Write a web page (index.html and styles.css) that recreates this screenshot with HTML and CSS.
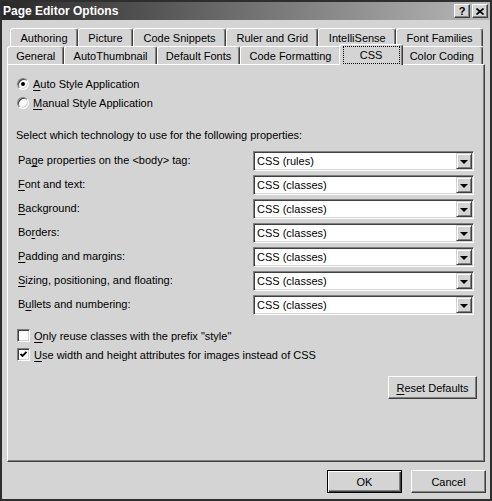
FILE: index.html
```html
<!DOCTYPE html>
<html lang="en">
<head>
    <meta charset="UTF-8" />
    <title>Page Editor Options</title>
    <link rel="stylesheet" href="styles.css">
</head>
<body>
<div class="window">
    <div class="titlebar">
        <span class="title">Page Editor Options</span>
        <div class="caption-btns">
            <span class="cap-btn">?</span>
            <span class="cap-btn">
                <svg width="8" height="7" viewBox="0 0 8 7"><path d="M0.5 0.5 L7.5 6.5 M7.5 0.5 L0.5 6.5" stroke="#000" stroke-width="1.6"/></svg>
            </span>
        </div>
    </div>

    <div class="tabs">
        <div class="tab-row back">
            <div class="tab">Authoring</div>
            <div class="tab">Picture</div>
            <div class="tab">Code Snippets</div>
            <div class="tab">Ruler and Grid</div>
            <div class="tab">IntelliSense</div>
            <div class="tab">Font Families</div>
        </div>
        <div class="tab-row front">
            <div class="tab">General</div>
            <div class="tab">AutoThumbnail</div>
            <div class="tab">Default Fonts</div>
            <div class="tab">Code Formatting</div>
            <div class="tab active"><span class="focus">CSS</span></div>
            <div class="tab">Color Coding</div>
        </div>
    </div>

    <div class="panel">
        <div class="radio-list">
            <div class="opt"><span class="radio checked"></span><span><u>A</u>uto Style Application</span></div>
            <div class="opt"><span class="radio"></span><span><u>M</u>anual Style Application</span></div>
        </div>

        <div class="intro">Select which technology to use for the following properties:</div>

        <div class="props">
            <span class="prop-label">Pa<u>g</u>e properties on the &lt;body&gt; tag:</span>
            <div class="combo"><span class="combo-value">CSS (rules)</span><span class="combo-btn"></span></div>

            <span class="prop-label"><u>F</u>ont and text:</span>
            <div class="combo"><span class="combo-value">CSS (classes)</span><span class="combo-btn"></span></div>

            <span class="prop-label"><u>B</u>ackground:</span>
            <div class="combo"><span class="combo-value">CSS (classes)</span><span class="combo-btn"></span></div>

            <span class="prop-label">Bo<u>r</u>ders:</span>
            <div class="combo"><span class="combo-value">CSS (classes)</span><span class="combo-btn"></span></div>

            <span class="prop-label"><u>P</u>adding and margins:</span>
            <div class="combo"><span class="combo-value">CSS (classes)</span><span class="combo-btn"></span></div>

            <span class="prop-label"><u>S</u>izing, positioning, and floating:</span>
            <div class="combo"><span class="combo-value">CSS (classes)</span><span class="combo-btn"></span></div>

            <span class="prop-label">B<u>u</u>llets and numbering:</span>
            <div class="combo"><span class="combo-value">CSS (classes)</span><span class="combo-btn"></span></div>
        </div>

        <div class="checks">
            <div class="opt"><span class="check"></span><span><u>O</u>nly reuse classes with the prefix "style"</span></div>
            <div class="opt">
                <span class="check">
                    <svg width="7" height="7" viewBox="0 0 7 7"><path d="M0.5 3 L2.5 5 L6.5 1" fill="none" stroke="#000" stroke-width="1.8"/></svg>
                </span>
                <span><u>U</u>se width and height attributes for images instead of CSS</span>
            </div>
        </div>

        <div class="actions">
            <button class="btn reset"><u>R</u>eset Defaults</button>
        </div>
    </div>

    <div class="footer">
        <button class="btn default">OK</button>
        <button class="btn">Cancel</button>
    </div>
</div>
</body>
</html>
```

FILE: styles.css
```css
* {
    box-sizing: border-box;
}
body {
    margin: 0;
    font-family: "Liberation Sans", Arial, sans-serif;
    font-size: 11px;
    color: #000;
    background: #d4d4d4;
}
u {
    text-decoration-thickness: 1px;
    text-underline-offset: 2px;
}
.window {
    width: 492px;
    height: 501px;
    border: 2px solid #2e2e2e;
    background: #d4d4d4;
    display: flex;
    flex-direction: column;
}

/* title bar */
.titlebar {
    height: 18px;
    flex: none;
    display: flex;
    align-items: center;
    justify-content: space-between;
    padding: 0 2px 0 1px;
    background: linear-gradient(to right, #282828, #b8b8b8);
    color: #fff;
    font-weight: bold;
    font-size: 12px;
    user-select: none;
}
.caption-btns {
    display: flex;
    gap: 2px;
}
.cap-btn {
    width: 16px;
    height: 14px;
    display: flex;
    align-items: center;
    justify-content: center;
    background: #d4d4d4;
    color: #000;
    font-size: 11px;
    font-weight: bold;
    border: 1px solid;
    border-color: #fff #404040 #404040 #fff;
    box-shadow: inset -1px -1px #808080;
}

/* tabs */
.tabs {
    flex: none;
    margin: 8px 5px 0;
}
.tab-row {
    display: flex;
    height: 18px;
}
.tab-row.back {
    margin: 0 2px 0 3px;
}
.tab-row.front {
    margin: 0 2px 0 0;
}
.tab {
    flex: 1 1 auto;
    display: flex;
    align-items: center;
    justify-content: center;
    padding: 0 5px;
    white-space: nowrap;
    background: #d4d4d4;
    border-top: 1px solid #fff;
    border-left: 1px solid #fff;
    border-right: 1px solid #404040;
    box-shadow: inset -1px 0 #808080;
    border-radius: 3px 3px 0 0;
}
.tab.active {
    position: relative;
    z-index: 1;
    align-self: flex-start;
    height: 21px;
    margin: -2px -2px 0;
    padding: 1px 2px 1px 3px;
}
.focus {
    flex: 1;
    height: 100%;
    display: flex;
    align-items: center;
    justify-content: center;
    padding: 0 13px;
    border: 1px dotted #000;
}

/* panel */
.panel {
    flex: 1;
    margin: 0 5px;
    padding: 9px 9px 0 9px;
    border: 1px solid;
    border-color: #fff #404040 #404040 #fff;
    box-shadow: inset -1px -1px #808080;
}
.opt {
    display: flex;
    align-items: center;
    height: 19px;
    gap: 4px;
}
.radio {
    width: 12px;
    height: 12px;
    border-radius: 50%;
    background: #fff;
    border: 1px solid;
    border-color: #808080 #fff #fff #808080;
    box-shadow: inset 1px 1px #404040, inset -1px -1px #d4d4d4;
    display: flex;
    align-items: center;
    justify-content: center;
}
.radio.checked::after {
    content: "";
    width: 4px;
    height: 4px;
    border-radius: 50%;
    background: #000;
}
.intro {
    margin: 16px 0 0 -1px;
    height: 14px;
    line-height: 14px;
}
.props {
    margin: 9px 1px 0 0;
    display: grid;
    grid-template-columns: 1fr 221px;
    row-gap: 4px;
    align-items: center;
}
.prop-label {
    padding-left: 1px;
    margin-top: -2px;
}
.combo {
    height: 20px;
    display: flex;
    align-items: center;
    padding: 2px;
    background: #fff;
    border: 1px solid;
    border-color: #808080 #fff #fff #808080;
    box-shadow: inset 1px 1px #404040, inset -1px -1px #d4d4d4;
}
.combo-value {
    flex: 1;
    padding-left: 1px;
}
.combo-btn {
    width: 16px;
    height: 16px;
    margin-right: -1px;
    display: flex;
    align-items: center;
    justify-content: center;
    background: #d4d4d4;
    border: 1px solid;
    border-color: #d4d4d4 #404040 #404040 #d4d4d4;
    box-shadow: inset 1px 1px #fff, inset -1px -1px #808080;
}
.combo-btn::after {
    content: "";
    border-left: 4px solid transparent;
    border-right: 4px solid transparent;
    border-top: 4px solid #000;
    margin-top: 1px;
}
.checks {
    margin-top: 11px;
}
.check {
    width: 13px;
    height: 13px;
    background: #fff;
    border: 1px solid;
    border-color: #808080 #fff #fff #808080;
    box-shadow: inset 1px 1px #404040, inset -1px -1px #d4d4d4;
    display: flex;
    align-items: center;
    justify-content: center;
}
.actions {
    margin: 12px -2px 0 0;
    display: flex;
    justify-content: flex-end;
}

/* buttons */
.btn {
    height: 23px;
    width: 75px;
    padding: 0;
    font: inherit;
    color: #000;
    background: #d4d4d4;
    border: 1px solid;
    border-color: #fff #404040 #404040 #fff;
    box-shadow: inset -1px -1px #808080;
}
.btn.reset {
    width: 89px;
}
.btn.default {
    border: 1px solid #000;
    box-shadow: inset 1px 1px #fff, inset -1px -1px #404040, inset -2px -2px #808080;
}
.footer {
    flex: none;
    display: flex;
    justify-content: flex-end;
    gap: 9px;
    padding: 8px 4px 6px;
}
```
